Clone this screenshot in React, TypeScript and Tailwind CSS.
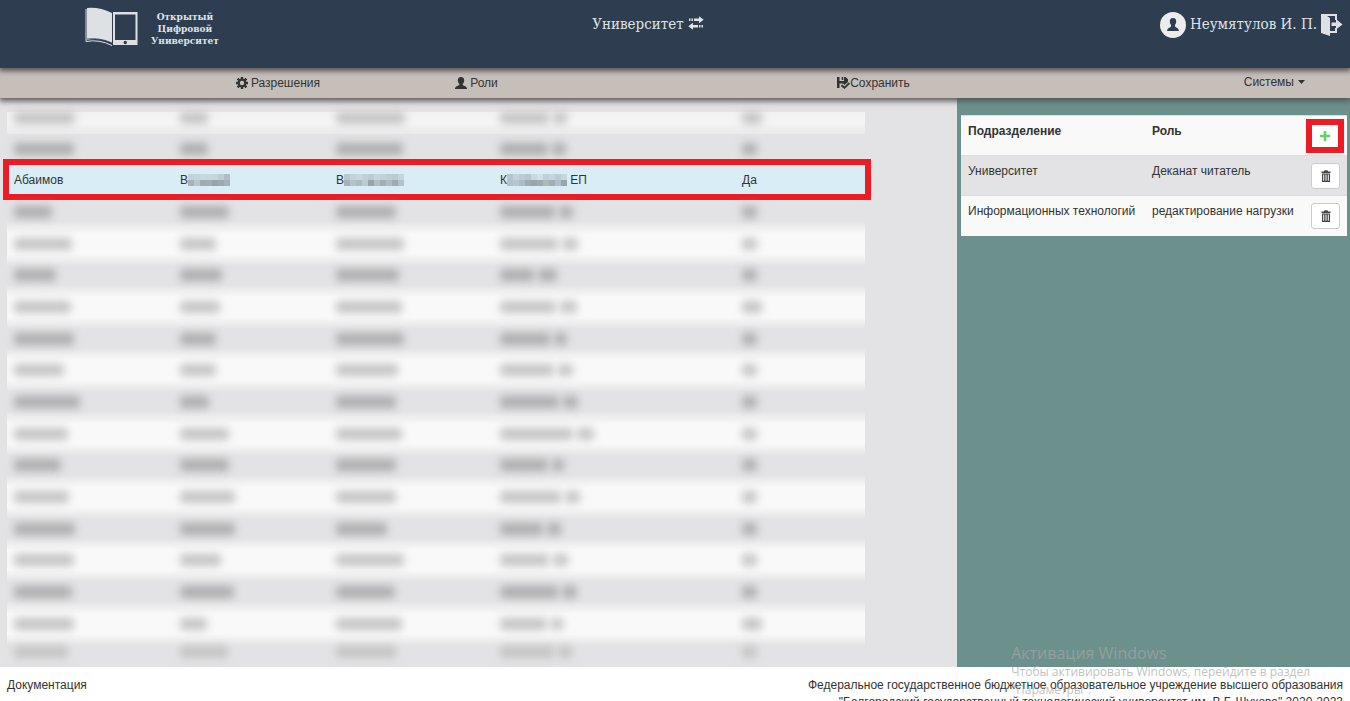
import { ReactNode } from "react";
import { clsx } from "clsx";

interface HiddenRow {
  surname: number;
  name: number;
  patronymic: number;
  login: [number, number];
  active: number;
}

// Widths of the blurred values, in pixels
const hiddenRow = (
  surname: number,
  name: number,
  patronymic: number,
  login: [number, number],
  active = 15
): HiddenRow => ({ surname, name, patronymic, login, active });

const rowsBefore = [
  hiddenRow(61, 28, 69, [49, 14], 20),
  hiddenRow(60, 28, 67, [48, 14]),
];

const rowsAfter = [
  hiddenRow(38, 49, 60, [55, 14]),
  hiddenRow(58, 36, 68, [58, 16]),
  hiddenRow(42, 42, 63, [34, 19]),
  hiddenRow(57, 40, 66, [56, 17], 20),
  hiddenRow(60, 36, 68, [50, 13]),
  hiddenRow(50, 36, 62, [54, 15]),
  hiddenRow(66, 29, 60, [59, 15]),
  hiddenRow(54, 49, 66, [73, 17]),
  hiddenRow(47, 49, 60, [48, 12]),
  hiddenRow(55, 55, 60, [61, 15]),
  hiddenRow(61, 55, 51, [43, 14]),
  hiddenRow(60, 41, 68, [49, 15]),
  hiddenRow(58, 54, 59, [58, 15]),
  hiddenRow(60, 27, 66, [47, 12], 20),
  hiddenRow(54, 48, 60, [54, 14]),
];

const roles = [
  { unit: "Университет", role: "Деканат читатель" },
  { unit: "Информационных технологий", role: "редактирование нагрузки" },
];

const BookLogo = () => (
  <svg viewBox="0 0 54 40" className="h-10 w-[54px]" aria-hidden="true">
    <path d="M2 1 Q15 0 27 6 V36 Q14 30 2 33 Z" fill="#dde1e4" />
    <path d="M1 2 V34.500 Q14 32 27 38.500" fill="none" stroke="#dde1e4" strokeWidth="1" />
    <path d="M2 32 Q15 30.500 27 36" fill="none" stroke="#2e3e50" strokeWidth="0.800" />
    <path
      d="M28 5 H52.500 V38 H28 Z M30 7.500 V33 H50.500 V7.500 Z"
      fill="#dde1e4"
      fillRule="evenodd"
    />
    <circle cx="40.300" cy="35.500" r="1.700" fill="#2e3e50" />
  </svg>
);

const TransferIcon = () => (
  <svg viewBox="0 0 16 14" className="h-3.5 w-4" fill="currentColor" aria-hidden="true">
    <path d="M1 2.500h1.500v2.500H1zM3.500 2.500H5v2.500H3.500zM6 2.500h5V.3L15.700 3.800 11 7.300V5H6z" />
    <path d="M15 9h-1.500v2.500H15zM12.500 9H11v2.500h1.500zM10 9H5V6.700L.3 10.200 5 13.700V11.500h5z" />
  </svg>
);

const AvatarIcon = () => (
  <svg viewBox="0 0 26 26" className="size-[26px]" aria-hidden="true">
    <circle cx="13" cy="13" r="13" fill="#ececec" />
    <path
      d="M13 6c2.300 0 3.400 1.600 3.200 3.700-.1 1.500-.6 2.500-1.200 3.200v1.500c.8.9 3.700 1.300 3.900 4.600H7.100c.2-3.300 3.100-3.700 3.900-4.600v-1.500c-.6-.7-1.100-1.700-1.200-3.200C9.600 7.600 10.700 6 13 6z"
      fill="#2e3e50"
    />
  </svg>
);

const LogoutIcon = () => (
  <svg viewBox="0 0 22 22" className="size-[22px]" fill="#dde0e4" aria-hidden="true">
    <path d="M0 0h16v6h-2V2H6l3 2v13h5v-3h2v5H9v3L0 19z" />
    <path d="M10.500 8.500H15V5l6.500 5.500L15 15.500V12h-4.500z" />
  </svg>
);

const CogIcon = () => (
  <svg viewBox="0 0 12 12" className="size-3" aria-hidden="true">
    <g stroke="currentColor" strokeWidth="2.400">
      <path d="M6 0V3M6 9V12M0 6H3M9 6H12M1.600 1.600L4 4M8 8L10.400 10.400M10.400 1.600L8 4M4 8L1.600 10.400" />
    </g>
    <circle cx="6" cy="6" r="3.300" fill="none" stroke="currentColor" strokeWidth="2.200" />
  </svg>
);

const UserIcon = () => (
  <svg viewBox="0 0 12 12" className="size-3" fill="currentColor" aria-hidden="true">
    <path d="M6 0c2.200 0 3.300 1.300 3.200 3.300C9.100 5 8.600 6.200 7.700 7v1c.7.700 4.300 1 4.300 4H0c0-3 3.600-3.300 4.300-4V7c-.9-.8-1.400-2-1.500-3.700C2.700 1.300 3.800 0 6 0z" />
  </svg>
);

const SaveIcon = () => (
  <svg viewBox="0 0 13 12" className="h-3 w-[13px]" fill="currentColor" aria-hidden="true">
    <path d="M0 0h2.500v4h4.500V0h1.500L11 2.300V5L7.500 8 6 6.500H2.500V11H0z" />
    <path d="M4.700 0h1.500v3H4.700zM3.700 9l1.500-1.500 2.300 2.100 4.300-4.300L13 6.800 7.500 12z" />
  </svg>
);

const TrashIcon = () => (
  <svg viewBox="0 0 10 12" className="h-3 w-2.5" fill="#444" aria-hidden="true">
    <path
      d="M3 1.500 3.500.3h3L7 1.500h2.500V3h-9V1.500zM1 3.600h8V12H1zM2.200 4.600v6.200h1V4.600zM4.500 4.600v6.200h1V4.600zM6.800 4.600v6.200h1V4.600z"
      fillRule="evenodd"
    />
  </svg>
);

const PlusIcon = () => (
  <svg viewBox="0 0 10 10" className="size-2.5" fill="#5fd564" aria-hidden="true">
    <path d="M3.700 0h2.600v3.700H10v2.600H6.300V10H3.700V6.300H0V3.700h3.700z" />
  </svg>
);

// Pixelated patch over the rest of a value: top shades, then bottom shades
const Mosaic = ({ top, bottom }: { top: string[]; bottom: string[] }) => (
  <svg
    width={top.length * 6}
    height="12"
    className="inline-block align-[-2px]"
    shapeRendering="crispEdges"
    aria-hidden="true"
  >
    {top.map((fill, i) => (
      <rect key={i} x={i * 6} y="0" width="6" height="6" fill={fill} />
    ))}
    {bottom.map((fill, i) => (
      <rect key={i} x={i * 6} y="6" width="6" height="6" fill={fill} />
    ))}
  </svg>
);

const Smudge = ({ width, light }: { width: number; light: boolean }) => (
  <span
    className={clsx(
      "block h-3 rounded-sm blur-[4px]",
      light ? "bg-[#c4c4c4]" : "bg-[#adadae]"
    )}
    style={{ width }}
  />
);

const BlurredRow = ({
  row,
  light,
  className,
}: {
  row: HiddenRow;
  light: boolean;
  className: string;
}) => (
  <tr className={clsx("bg-no-repeat", className)}>
    {[row.surname, row.name, row.patronymic].map((width, i) => (
      <td key={i} className="px-[7px]">
        <Smudge width={width} light={light} />
      </td>
    ))}
    <td className="px-[7px]">
      <div className="flex gap-1">
        <Smudge width={row.login[0]} light={light} />
        <Smudge width={row.login[1]} light={light} />
      </div>
    </td>
    <td className="px-[7px]">
      <Smudge width={row.active} light={light} />
    </td>
  </tr>
);

const lightRow =
  "h-8 bg-[#eeeeef] bg-[linear-gradient(#eeeeef,#f9f9f9_6px,#f9f9f9_26px,#eeeeef)]";
const darkRow =
  "h-[31px] bg-[#eeeeef] bg-[linear-gradient(#eeeeef,#e3e3e5_6px,#e3e3e5_25px,#eeeeef)]";

const UsersTable = () => (
  <table className="h-[546px] w-full table-fixed border-collapse">
    <colgroup>
      <col className="w-[166px]" />
      <col className="w-[156px]" />
      <col className="w-[164px]" />
      <col className="w-[242px]" />
      <col />
    </colgroup>
    <tbody>
      <BlurredRow
        row={rowsBefore[0]}
        light
        className="h-[22px] bg-[#eaeaeb] bg-[linear-gradient(#f0f0f0,#f5f5f5_10px,#eaeaeb)] align-top"
      />
      <BlurredRow row={rowsBefore[1]} light={false} className="h-[30px]" />
      <tr className="relative h-8 bg-[#d9edf7]">
        <td className="px-[7px]">
          Абаимов
          <span className="pointer-events-none absolute -top-[5px] -right-1.5 -bottom-1 -left-1 border-6 border-[#ed1c24]" />
        </td>
        <td className="px-[7px]">
          В
          <Mosaic
            top={["#c3d2da", "#c3d4dd", "#c6d8e1", "#c5d7df", "#c3d5dd", "#bccdd6", "#adbec8"]}
            bottom={["#a6b3bb", "#b7c5cd", "#9eabb3", "#a0adb5", "#98a3ab", "#9ca7af", "#a3b1ba"]}
          />
        </td>
        <td className="px-[7px]">
          В
          <Mosaic
            top={["#b8c7d0", "#c3d2da", "#c7d7df", "#c0d0d8", "#bccbd4", "#c6d6de", "#c1d0d9", "#bdcdd6", "#bacad3", "#c5d6de"]}
            bottom={["#a4b1b9", "#b5c2ca", "#adbac2", "#bccad2", "#98a4ac", "#b0bdc5", "#a2aeb6", "#afbcc4", "#9daab2", "#b4c3cb"]}
          />
        </td>
        <td className="px-[7px]">
          К
          <Mosaic
            top={["#b5c4cd", "#c2d1da", "#bccbd4", "#b7c6cf", "#c8d8e1", "#d0e1ea", "#c0cfd8", "#c5d5dd", "#bccbd4", "#c6d6df"]}
            bottom={["#b2c0c9", "#b7c5cd", "#adbbc4", "#9eabb3", "#98a5ad", "#9eabb3", "#aeb8ba", "#a1aeb6", "#b2bfc7", "#99a5ad"]}
          />{" "}
          ЕП
        </td>
        <td className="px-[7px]">Да</td>
      </tr>
      <BlurredRow
        row={rowsAfter[0]}
        light={false}
        className="h-[31px] bg-[#eeeeef] bg-[linear-gradient(#e3e3e5_25px,#eeeeef)]"
      />
      {rowsAfter.slice(1, -1).map((row, i) => (
        <BlurredRow
          key={i}
          row={row}
          light={i % 2 === 0}
          className={i % 2 === 0 ? lightRow : darkRow}
        />
      ))}
      <BlurredRow
        row={rowsAfter[rowsAfter.length - 1]}
        light
        className="h-[18px] bg-[#e3e3e5] bg-[linear-gradient(#eeeeef,#e3e3e5_6px)] align-bottom"
      />
    </tbody>
  </table>
);

const IconButton = ({ label, children }: { label: string; children: ReactNode }) => (
  <button
    type="button"
    aria-label={label}
    className="flex h-[26px] w-[29px] items-center justify-center rounded-[3px] border border-[#ccc] bg-white"
  >
    {children}
  </button>
);

const RolesTable = () => (
  <table className="w-full table-fixed border-collapse text-left">
    <colgroup>
      <col className="w-[184px]" />
      <col />
      <col className="w-[44px]" />
    </colgroup>
    <thead>
      <tr className="h-10 border-t border-[#ddd] bg-[#f9f9f9] align-top">
        <th className="px-[7px] pt-[7px]">Подразделение</th>
        <th className="px-[7px] pt-[7px]">Роль</th>
        <th className="px-[7px] pt-[7px]">
          <div className="relative">
            <IconButton label="Добавить">
              <PlusIcon />
            </IconButton>
            <span className="pointer-events-none absolute -inset-x-1 -inset-y-1 w-[38px] border-6 border-[#ed1c24]" />
          </div>
        </th>
      </tr>
    </thead>
    <tbody>
      {roles.map(({ unit, role }) => (
        <tr
          key={unit}
          className="h-10 border-t border-[#ddd] align-top odd:bg-[#e3e3e5] even:bg-[#f9f9f9]"
        >
          <td className="px-[7px] pt-[7px] whitespace-nowrap">{unit}</td>
          <td className="px-[7px] pt-[7px] whitespace-nowrap">{role}</td>
          <td className="px-2 pt-[7px]">
            <IconButton label={`Удалить: ${unit}`}>
              <TrashIcon />
            </IconButton>
          </td>
        </tr>
      ))}
    </tbody>
  </table>
);

const Header = () => (
  <header className="relative z-20 grid h-[68px] shrink-0 grid-cols-3 bg-[#2e3e50] font-['DejaVu_Serif_Condensed','DejaVu_Serif',serif] text-[15px] leading-6 text-[#dfe3e6] shadow-[0_2px_5px_1px_#555]">
    <a href="#" className="flex items-start gap-3 pt-[7px] pl-[85px]">
      <BookLogo />
      <span className="pt-1 text-center font-['DejaVu_Serif',serif] text-[9px] leading-3 font-bold">
        Открытый
        <br />
        Цифровой
        <br />
        Университет
      </span>
    </a>
    <div className="flex items-start justify-center pt-3 pr-[54px]">
      <button type="button" className="flex gap-1">
        Университет
        <span className="pt-1">
          <TransferIcon />
        </span>
      </button>
    </div>
    <div className="flex items-start justify-end gap-1 pt-3 pr-[7px]">
      <AvatarIcon />
      <span className="whitespace-nowrap">Неумятулов И. П.</span>
      <button type="button" aria-label="Выйти" className="pt-0.5">
        <LogoutIcon />
      </button>
    </div>
  </header>
);

const navLink = "flex items-center justify-center";

const Nav = () => (
  <nav className="relative z-10 grid h-[30px] shrink-0 grid-cols-[9fr_10fr_10fr_10fr_10fr_10fr_9fr] bg-[#c6beb8] shadow-[0_2px_6px_1px_#555]">
    <a href="#" className={clsx(navLink, "col-start-2 gap-[3px]")}>
      <CogIcon />
      Разрешения
    </a>
    <a href="#" className={clsx(navLink, "gap-[3px]")}>
      <UserIcon />
      Роли
    </a>
    <button type="button" className={clsx(navLink, "col-start-5")}>
      <SaveIcon />
      Сохранить
    </button>
    <button
      type="button"
      className="col-start-7 flex items-center justify-end gap-1 pr-[45px] pb-0.5"
    >
      Системы
      <svg viewBox="0 0 7 4" className="h-1 w-[7px]" fill="currentColor" aria-hidden="true">
        <path d="M0 0h7L3.500 4z" />
      </svg>
    </button>
  </nav>
);

export default function App() {
  return (
    <div className="relative flex h-screen flex-col overflow-hidden bg-white font-['Liberation_Sans',Arial,sans-serif] text-xs leading-[17px] text-[#333]">
      <Header />
      <Nav />
      <main className="flex min-h-0 flex-1">
        <section className="flex-1 bg-[#e3e3e5] pt-3.5 pr-[92px] pl-[7px]">
          <UsersTable />
        </section>
        <aside className="w-[393px] bg-[#6c918c] pt-[17px] pr-[3px] pl-1">
          <RolesTable />
        </aside>
      </main>
      <footer className="flex h-[34px] shrink-0 justify-between px-[7px] pt-2.5">
        <a href="#">Документация</a>
        <p className="text-right">
          Федеральное государственное бюджетное образовательное учреждение высшего
          образования
          <br />
          "Белгородский государственный технологический университет им. В.Г. Шухова"
          2020-2023
        </p>
      </footer>
      <div className="pointer-events-none absolute right-10 bottom-0.5 z-30 font-['Open_Sans',sans-serif] text-xs leading-[18px] whitespace-nowrap text-[#a5a5a5]/70">
        <p className="text-base leading-5">Активация Windows</p>
        <p>Чтобы активировать Windows, перейдите в раздел</p>
        <p>"Параметры".</p>
      </div>
    </div>
  );
}
